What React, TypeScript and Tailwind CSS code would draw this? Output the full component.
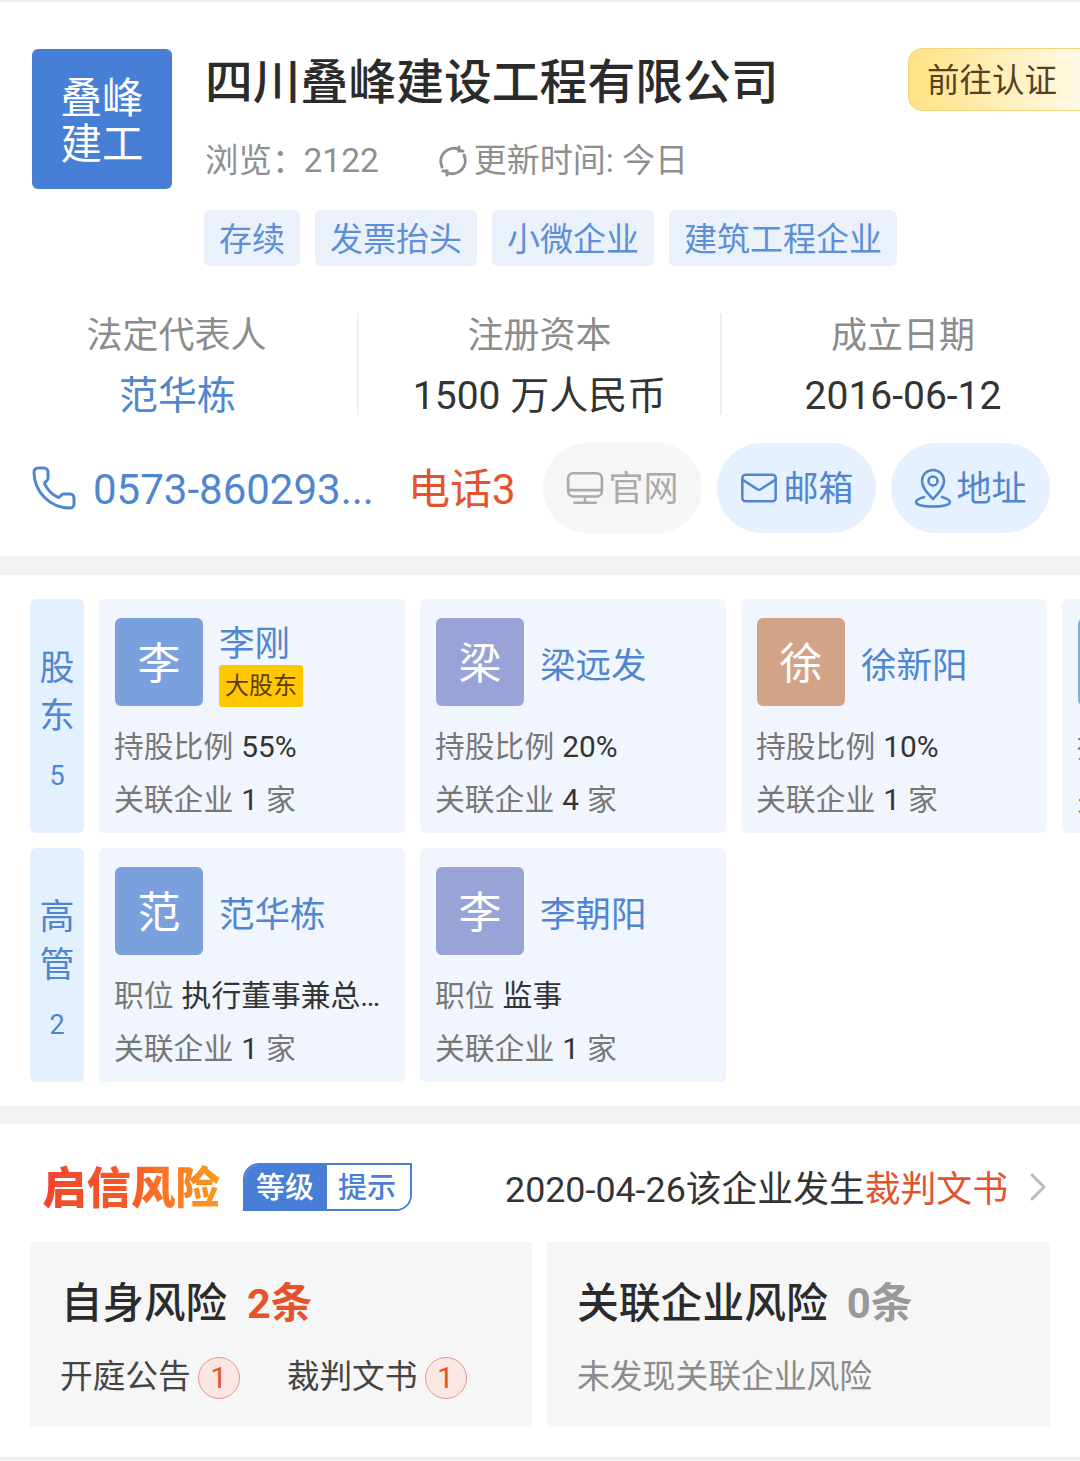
import React from "react";
import { Phone, Mail } from "lucide-react";

const FONT = "font-['Roboto','Noto_Sans_CJK_SC',sans-serif]";

type Person = {
  char: string;
  name: string;
  color: string;
  label: string;
  value: string;
  count: number;
  major?: boolean;
};

const holders: Person[] = [
  { char: "李", name: "李刚", color: "bg-[#7aa0de]", label: "持股比例", value: "55%", count: 1, major: true },
  { char: "梁", name: "梁远发", color: "bg-[#9aa3d8]", label: "持股比例", value: "20%", count: 4 },
  { char: "徐", name: "徐新阳", color: "bg-[#d2a386]", label: "持股比例", value: "10%", count: 1 },
  { char: "张", name: "张", color: "bg-[#7fb4cc]", label: "持股比例", value: "10%", count: 1 },
];

const managers: Person[] = [
  { char: "范", name: "范华栋", color: "bg-[#7aa0de]", label: "职位", value: "执行董事兼总…", count: 1 },
  { char: "李", name: "李朝阳", color: "bg-[#9aa3d8]", label: "职位", value: "监事", count: 1 },
];

const SideLabel = ({ a, b, n }: { a: string; b: string; n: number }) => (
  <div className="w-[54px] h-[234px] shrink-0 rounded-[6px] bg-[#e3f0fe] flex flex-col items-center pt-[46px] text-[#4f86cf]">
    <span className="text-[35px] leading-[48px]">{a}</span>
    <span className="text-[35px] leading-[48px]">{b}</span>
    <span className="text-[27px] leading-[32px] mt-[19px]">{n}</span>
  </div>
);

const PersonCard = ({ p }: { p: Person }) => (
  <div className="w-[306px] h-[234px] shrink-0 rounded-[6px] bg-[#f0f5fe] pl-[15px] pt-[19px]">
    <div className="flex items-center h-[88px]">
      <div className={`ml-[1px] w-[88px] h-[88px] rounded-[6px] flex items-center justify-center pt-[4px] text-white text-[43px] ${p.color}`}>
        {p.char}
      </div>
      <div className={`ml-[16px] flex flex-col items-start ${p.major ? "pt-[4px]" : "pt-[8px]"}`}>
        <span className="text-[35.500px] leading-[46px] text-[#4f86cf] whitespace-nowrap">{p.name}</span>
        {p.major && (
          <span className="w-[84px] h-[42px] -mt-[2px] rounded-[3px] bg-[#ffc800] text-[#5c3d00] text-[24px] leading-[42px] text-center">
            大股东
          </span>
        )}
      </div>
    </div>
    <div className="mt-[15px] h-[53px] flex items-center text-[29.800px] text-[#777] whitespace-nowrap">
      {p.label}
      <span className="ml-[8px] text-[#333]">{p.value}</span>
    </div>
    <div className="h-[52px] flex items-center text-[29.800px] text-[#777] whitespace-nowrap">
      关联企业
      <span className="mx-[8px] text-[#333]">{p.count}</span>
      家
    </div>
  </div>
);

const Pill = ({ gray, icon, text }: { gray?: boolean; icon: React.ReactNode; text: string }) => (
  <div
    className={`w-[159px] h-[90px] rounded-full flex items-center justify-center gap-[4px] text-[35px] ${
      gray ? "bg-[#f6f6f6] text-[#aaa]" : "bg-[#e5f1fe] text-[#4f86cf]"
    }`}
  >
    {icon}
    <span className="pt-[5px]">{text}</span>
  </div>
);

const Stat = ({ label, value, blue, className }: { label: string; value: string; blue?: boolean; className: string }) => (
  <div className={`flex flex-col items-center pt-[1px] ${className}`}>
    <span className="text-[36px] leading-[44px] text-[#8c8c8c]">{label}</span>
    <span className={`text-[39px] leading-[48px] mt-[14px] ${blue ? "ml-[2px] text-[#4f86cf]" : "text-[#333]"}`}>{value}</span>
  </div>
);

const Count = ({ n }: { n: number }) => (
  <span className="ml-[7px] w-[42px] h-[42px] rounded-full border border-[#e39a88] bg-[#fae6e2] text-[#e5532d] text-[30px] flex items-center justify-center">
    {n}
  </span>
);

export default function App() {
  return (
    <div className={`w-[1080px] h-[1461px] overflow-hidden bg-white ${FONT}`}>
      {/* top */}
      <div className="h-[556px] border-t-[2px] border-[#eeeeee] relative">
        <div className="flex pl-[32px] pt-[47px]">
          <div className="w-[140px] h-[140px] pt-[6px] rounded-[6px] bg-[#477ed6] text-white text-[41.500px] leading-[46px] flex items-center justify-center text-center shrink-0">
            叠峰
            <br />
            建工
          </div>
          <div className="ml-[33px] pt-[2px]">
            <div className="text-[47.800px] leading-[64px] font-medium text-[#2b2b2b] whitespace-nowrap">四川叠峰建设工程有限公司</div>
            <div className="mt-[22px] h-[48px] flex items-center text-[33.500px] text-[#8f8f8f] whitespace-nowrap">
              <span>浏览：</span>
              <span className="-ml-[2px]">2122</span>
              <svg viewBox="0 0 32 32" className="ml-[58px] w-[32px] h-[32px] mr-[5px]" fill="none" stroke="#8f8f8f" strokeWidth="3" strokeLinecap="round">
                <path d="M5 22A13 13 0 0 1 22 4.500" />
                <path d="M27 10A13 13 0 0 1 10 27.500" />
                <path d="M22 2v4h4" />
                <path d="M10 30v-4H6" />
              </svg>
              <span className="text-[33px]">更新时间: 今日</span>
            </div>
          </div>
        </div>
        <div className="absolute left-[908px] top-[46px] w-[200px] h-[63px] pt-[4px] rounded-[14px] border border-[#f3d479] bg-gradient-to-r from-[#ffe281] to-[#fffdf2] text-[#5a4020] text-[32.500px] flex items-center pl-[18px]">
          前往认证
        </div>
        <div className="flex gap-[15px] pl-[204px] mt-[21px]">
          {["存续", "发票抬头", "小微企业", "建筑工程企业"].map((t) => (
            <span key={t} className="h-[56px] px-[15px] pt-[3px] rounded-[6px] bg-[#ebf1fb] text-[#5c8fd6] text-[33px] flex items-center">
              {t}
            </span>
          ))}
        </div>
        <div className="flex mt-[47px] h-[104px] items-start">
          <Stat className="w-[357px] pr-[4px]" label="法定代表人" value="范华栋" blue />
          <div className="w-[2px] h-[102px] bg-[#eeeeee]" />
          <Stat className="w-[361px]" label="注册资本" value="1500 万人民币" />
          <div className="w-[2px] h-[102px] bg-[#eeeeee]" />
          <Stat className="flex-1 pl-[4px]" label="成立日期" value="2016-06-12" />
        </div>
        <div className="flex items-center pl-[30px] mt-[26px] h-[90px]">
          <Phone className="w-[48px] h-[48px] text-[#4f86cf]" strokeWidth={1.5} />
          <span className="ml-[15px] pt-[3px] text-[42px] text-[#4f86cf] w-[315px] whitespace-nowrap">0573-860293...</span>
          <span className="pt-[3px] text-[42px] text-[#e5532d] w-[135px] whitespace-nowrap">电话3</span>
          <div className="flex gap-[15px]">
            <Pill
              gray
              text="官网"
              icon={
                <svg viewBox="0 0 36 32" className="w-[38px] h-[34px]" fill="none" stroke="#aaa" strokeWidth="2.500" strokeLinecap="round">
                  <rect x="2" y="2" width="32" height="22" rx="5" />
                  <path d="M3 18h30M18 24v5M8 30h20" />
                </svg>
              }
            />
            <Pill text="邮箱" icon={<Mail className="w-[40px] h-[40px]" strokeWidth={1.5} />} />
            <Pill
              text="地址"
              icon={
                <svg viewBox="0 0 38 40" className="w-[38px] h-[40px]" fill="none" stroke="#4f86cf" strokeWidth="2.500" strokeLinecap="round" strokeLinejoin="round">
                  <path d="M19 31C12 24 8 19 8 13a11 11 0 0 1 22 0c0 6-4 11-11 18z" />
                  <circle cx="19" cy="13" r="4.500" />
                  <path d="M10 29c-5 1.500-8 3-8 5 0 3 8 4.500 17 4.500S36 37 36 34c0-2-3-3.500-8-5" />
                </svg>
              }
            />
          </div>
        </div>
      </div>

      <div className="h-[19px] bg-[#f2f2f2]" />

      {/* people */}
      <div className="pt-[24px] pl-[30px] flex flex-col gap-[15px] h-[531px]">
        <div className="flex gap-[15px]">
          <SideLabel a="股" b="东" n={5} />
          {holders.map((p) => (
            <PersonCard key={p.name} p={p} />
          ))}
        </div>
        <div className="flex gap-[15px]">
          <SideLabel a="高" b="管" n={2} />
          {managers.map((p) => (
            <PersonCard key={p.name} p={p} />
          ))}
        </div>
      </div>

      <div className="h-[18px] bg-[#f2f2f2]" />

      {/* risk */}
      <div className="h-[118px] flex items-center pt-[8px] pl-[42px] pr-[30px]">
        <span className="pt-[4px] text-[44.500px] leading-[60px] font-black whitespace-nowrap bg-gradient-to-r from-[#f2452d] via-[#f65a28] to-[#fb9a1c] bg-clip-text text-transparent">
          启信风险
        </span>
        <div className="ml-[23px] w-[169px] h-[48px] flex rounded-tl-[16px] rounded-br-[16px] border-[2px] border-[#477ed6] overflow-hidden">
          <span className="w-[82px] pt-[4px] pr-[2px] bg-[#477ed6] text-white text-[29px] font-medium flex items-center justify-center">等级</span>
          <span className="flex-1 pt-[4px] pr-[3px] bg-white text-[#477ed6] text-[29px] font-medium flex items-center justify-center">提示</span>
        </div>
        <span className="ml-[93px] pt-[8px] text-[35.800px] text-[#333] whitespace-nowrap">
          2020-04-26该企业发生<span className="text-[#e5532d]">裁判文书</span>
        </span>
        <svg viewBox="0 0 18 28" className="ml-[21px] w-[18px] h-[28px]" fill="none" stroke="#bbb" strokeWidth="3" strokeLinecap="round" strokeLinejoin="round">
          <path d="M3 2l12 12L3 26" />
        </svg>
      </div>
      <div className="flex gap-[15px] px-[30px]">
        <div className="w-[502px] h-[185px] bg-[#f6f6f6] pl-[30px] pt-[34px]">
          <div className="text-[41.500px] leading-[56px] font-medium text-[#2b2b2b]">
            <span className="ml-[1px]">自身风险</span>
            <span className="ml-[20px] text-[#e5532d] font-bold">2条</span>
          </div>
          <div className="mt-[21px] flex items-center text-[32.700px] text-[#444]">
            开庭公告
            <Count n={1} />
            <span className="ml-[47px]">裁判文书</span>
            <Count n={1} />
          </div>
        </div>
        <div className="w-[503px] h-[185px] bg-[#f6f6f6] pl-[30px] pt-[34px]">
          <div className="text-[41.800px] leading-[56px] font-medium text-[#2b2b2b]">
            关联企业风险
            <span className="ml-[19px] text-[#999] font-bold">0条</span>
          </div>
          <div className="mt-[21px] h-[49px] flex items-center text-[32.800px] text-[#8c8c8c]">未发现关联企业风险</div>
        </div>
      </div>
      <div className="mt-[30px] h-[4px] bg-[#f2f2f2]" />
    </div>
  );
}
